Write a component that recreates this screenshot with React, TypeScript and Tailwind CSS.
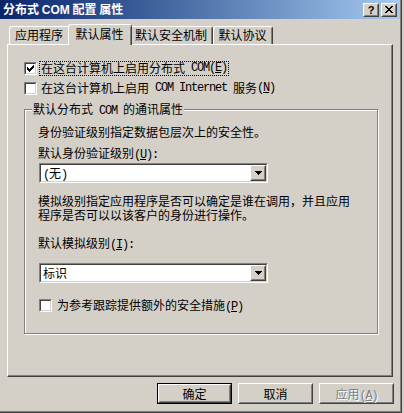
import React from "react";

function Txt({ s }: { s: string }) {
  const parts = s.match(/[\x00-\x7f]+|[^\x00-\x7f]+/g) || [];
  return (
    <>
      {parts.map((p, i) => {
        if (/^[\x00-\x7f]+$/.test(p)) {
          const segs = p.split(/(&.)/);
          return (
            <span
              key={i}
              className="font-['Liberation_Mono',monospace] text-[12px] tracking-[-1.2px] whitespace-pre"
            >
              {segs.map((g, j) =>
                g.startsWith("&") && g.length === 2 ? (
                  <u key={j} className="underline underline-offset-[1px]">
                    {g[1]}
                  </u>
                ) : (
                  <React.Fragment key={j}>{g}</React.Fragment>
                )
              )}
            </span>
          );
        }
        return <span key={i}>{p}</span>;
      })}
    </>
  );
}

function CheckBox({ checked }: { checked?: boolean }) {
  return (
    <div className="w-[13px] h-[13px] shrink-0 border border-t-[#808080] border-l-[#808080] border-r-white border-b-white">
      <div className="w-full h-full border border-t-[#404040] border-l-[#404040] border-r-[#d4d0c8] border-b-[#d4d0c8] bg-white flex items-center justify-center">
        {checked && (
          <svg width="7" height="7" viewBox="0 0 7 7" shapeRendering="crispEdges">
            <rect x="6" y="0" width="1" height="3" fill="black" />
            <rect x="5" y="1" width="1" height="3" fill="black" />
            <rect x="4" y="2" width="1" height="3" fill="black" />
            <rect x="3" y="3" width="1" height="3" fill="black" />
            <rect x="2" y="4" width="1" height="3" fill="black" />
            <rect x="1" y="3" width="1" height="3" fill="black" />
            <rect x="0" y="2" width="1" height="3" fill="black" />
          </svg>
        )}
      </div>
    </div>
  );
}

function Raised({ children, className = "" }: { children?: React.ReactNode; className?: string }) {
  return (
    <div className={"border border-t-white border-l-white border-r-[#404040] border-b-[#404040] " + className}>
      <div className="w-full h-full border border-t-[#d4d0c8] border-l-[#d4d0c8] border-r-[#808080] border-b-[#808080] flex items-center justify-center">
        {children}
      </div>
    </div>
  );
}

function Combo({ value }: { value: string }) {
  return (
    <div className="ml-[1px] w-[229px] h-[20px] border border-t-[#808080] border-l-[#808080] border-r-white border-b-white">
      <div className="w-full h-full border border-t-[#404040] border-l-[#404040] border-r-[#d4d0c8] border-b-[#d4d0c8] bg-white flex items-center">
        <div className="flex-1 pl-[2px] h-[14px] leading-[14px]">
          <Txt s={value} />
        </div>
        <Raised className="w-[16px] h-[16px] bg-[#d4d0c8]">
          <svg width="7" height="4" viewBox="0 0 7 4" shapeRendering="crispEdges">
            <polygon points="0,0 7,0 3.5,4" fill="black" />
          </svg>
        </Raised>
      </div>
    </div>
  );
}

function Tab({ label, selected, w }: { label: string; selected?: boolean; w: string }) {
  if (selected) {
    return (
      <div
        className={
          "relative z-10 -ml-[2px] -mr-[2px] -mb-[1px] h-[21px] bg-[#d4d0c8] border-t border-l border-white border-r border-r-[#404040] rounded-t-[3px] flex items-start justify-center pt-[2px] leading-[14px] " +
          w
        }
      >
        <div className="h-full w-full border-r border-[#808080] flex justify-center">{label}</div>
      </div>
    );
  }
  return (
    <div
      className={
        "h-[18px] bg-[#d4d0c8] border-t border-l border-white border-r border-r-[#404040] rounded-t-[3px] flex items-start justify-center pt-[1px] leading-[14px] " +
        w
      }
    >
      <div className="h-full w-full border-r border-[#808080] flex justify-center">{label}</div>
    </div>
  );
}

function Button({ label, def, disabled }: { label: string; def?: boolean; disabled?: boolean }) {
  const inner = (
    <Raised className="w-full h-full">
      <span
        className={
          disabled
            ? "text-[#808080] [text-shadow:1px_1px_0_#ffffff] leading-[14px] h-[14px]"
            : "leading-[14px] h-[14px]"
        }
      >
        <Txt s={label} />
      </span>
    </Raised>
  );
  return def ? (
    <div className="w-[75px] h-[21px] border border-black">{inner}</div>
  ) : (
    <div className="w-[75px] h-[21px]">{inner}</div>
  );
}

export default function App() {
  return (
    <div className="w-[404px] h-[413px] bg-[#d4d0c8] overflow-hidden font-['Noto_Sans_CJK_SC','Noto_Sans',sans-serif] text-[12px] text-black">
      <div className="w-[402px] h-[413px] border-r border-b border-[#404040]">
        <div className="w-full h-full border-r border-b border-[#808080] flex flex-col">
          {/* title bar */}
          <div className="h-[19px] w-full flex items-center justify-between bg-gradient-to-r from-[#0a246a] to-[#a6caf0] pl-[3px] pr-[3px]">
            <span className="text-white font-bold text-[12px] leading-[14px] whitespace-pre">
              分布式 <span className="font-['Liberation_Sans',sans-serif]">COM</span> 配置 属性
            </span>
            <div className="flex gap-[2px]">
              <Raised className="w-[16px] h-[14px] bg-[#d4d0c8]">
                <span className="font-['Liberation_Sans',sans-serif] font-bold text-[11px] leading-[10px]">?</span>
              </Raised>
              <Raised className="w-[16px] h-[14px] bg-[#d4d0c8]">
                <svg width="8" height="7" viewBox="0 0 8 7" shapeRendering="crispEdges">
                  <path d="M0 0h2v1h1v1h2V1h1V0h2v1H7v1H6v1H5v1h1v1h1v1h1v1H6V6H5V5H3v1H2v1H0V6h1V5h1V4h1V3H2V2H1V1H0z" fill="black" />
                </svg>
              </Raised>
            </div>
          </div>
          {/* tabs */}
          <div className="h-[25px] flex items-end pl-[9px]">
            <Tab label="应用程序" w="w-[61px]" />
            <Tab label="默认属性" w="w-[64px]" selected />
            <Tab label="默认安全机制" w="w-[83px]" />
            <Tab label="默认协议" w="w-[60px]" />
          </div>
          {/* panel */}
          <div className="ml-[7px] w-[386px] h-[333px] border-t border-l border-white border-r border-b border-r-[#404040] border-b-[#404040]">
            <div className="w-full h-full border-r border-b border-[#808080] pt-[13px] pl-[16px] flex flex-col">
              <div className="h-[20px] flex items-center">
                <CheckBox checked />
                <span className="ml-[2px] border border-dotted border-black px-[1px] leading-[12px] h-[15px] flex items-center">
                  <Txt s="在这台计算机上启用分布式 COM(&E)" />
                </span>
              </div>
              <div className="h-[20px] flex items-center">
                <CheckBox />
                <span className="ml-[2px] border border-transparent px-[1px] leading-[12px] h-[15px] flex items-center">
                  <Txt s="在这台计算机上启用 COM Internet 服务(&N)" />
                </span>
              </div>
              <fieldset className="mt-[4px] w-[354px] h-[232px] border border-[#808080] shadow-[inset_1px_1px_0_#ffffff,1px_1px_0_#ffffff] pl-[7px]">
                <legend className="px-[1px] h-[14px] leading-[14px] bg-[#d4d0c8]">
                  <Txt s="默认分布式 COM 的通讯属性" />
                </legend>
                <div className="pl-[6px] pt-[9px] flex flex-col leading-[14px]">
                  <div className="h-[14px]">身份验证级别指定数据包层次上的安全性。</div>
                  <div className="mt-[7px] h-[14px]">
                    <Txt s="默认身份验证级别(&U):" />
                  </div>
                  <div className="mt-[3px]">
                    <Combo value="(无)" />
                  </div>
                  <div className="mt-[11px] w-[320px] h-[28px]">
                    模拟级别指定应用程序是否可以确定是谁在调用，并且应用程序是否可以以该客户的身份进行操作。
                  </div>
                  <div className="mt-[14px] h-[14px]">
                    <Txt s="默认模拟级别(&I):" />
                  </div>
                  <div className="mt-[13px]">
                    <Combo value="标识" />
                  </div>
                  <div className="mt-[15px] h-[14px] flex items-center ml-[1px]">
                    <CheckBox />
                    <span className="ml-[5px] h-[14px] leading-[14px]">
                      <Txt s="为参考跟踪提供额外的安全措施(&P)" />
                    </span>
                  </div>
                </div>
              </fieldset>
            </div>
          </div>
          {/* buttons */}
          <div className="mt-[6px] flex justify-end gap-[6px] pr-[6px]">
            <Button label="确定" def />
            <Button label="取消" />
            <Button label="应用(&A)" disabled />
          </div>
        </div>
      </div>
    </div>
  );
}
